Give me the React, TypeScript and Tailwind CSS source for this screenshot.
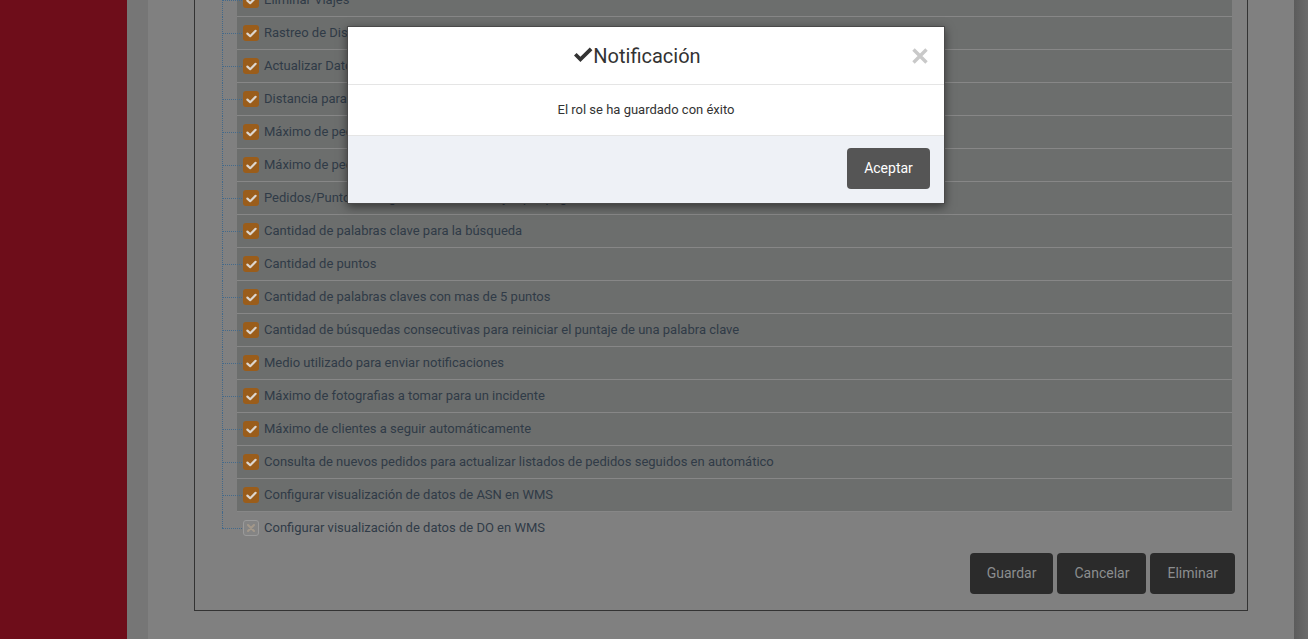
import React from "react";

const rows: { label: string; checked: boolean }[] = [
  { label: "Eliminar Viajes", checked: true },
  { label: "Rastreo de Dispositivos", checked: true },
  { label: "Actualizar Datos del Cliente", checked: true },
  { label: "Distancia para considerar la llegada a un punto", checked: true },
  { label: "Máximo de pedidos por viaje", checked: true },
  { label: "Máximo de pedidos por punto", checked: true },
  { label: "Pedidos/Puntos a cargar en la lista de viajes por página", checked: true },
  { label: "Cantidad de palabras clave para la búsqueda", checked: true },
  { label: "Cantidad de puntos", checked: true },
  { label: "Cantidad de palabras claves con mas de 5 puntos", checked: true },
  { label: "Cantidad de búsquedas consecutivas para reiniciar el puntaje de una palabra clave", checked: true },
  { label: "Medio utilizado para enviar notificaciones", checked: true },
  { label: "Máximo de fotografias a tomar para un incidente", checked: true },
  { label: "Máximo de clientes a seguir automáticamente", checked: true },
  { label: "Consulta de nuevos pedidos para actualizar listados de pedidos seguidos en automático", checked: true },
  { label: "Configurar visualización de datos de ASN en WMS", checked: true },
  { label: "Configurar visualización de datos de DO en WMS", checked: false },
];

function CheckBox({ checked }: { checked: boolean }) {
  if (checked) {
    return (
      <span className="w-[16px] h-[16px] rounded-[3px] bg-[#9a5d1b] flex items-center justify-center shrink-0">
        <svg width="11" height="9" viewBox="0 0 11 9">
          <path d="M1.4 4.6 L4.2 7.2 L9.6 1.8" fill="none" stroke="#dcd6cf" strokeWidth="2.2" strokeLinecap="round" strokeLinejoin="round" />
        </svg>
      </span>
    );
  }
  return (
    <span className="w-[16px] h-[16px] rounded-[3px] border border-[#9a9a9a] bg-[#848484] flex items-center justify-center shrink-0">
      <svg width="8" height="8" viewBox="0 0 8 8">
        <path d="M1 1 L7 7 M7 1 L1 7" stroke="#a3988a" strokeWidth="2" strokeLinecap="round" />
      </svg>
    </span>
  );
}

export default function App() {
  return (
    <div
      className="w-[1308px] h-[639px] overflow-hidden flex relative bg-[#808080]"
      style={{ fontFamily: "Roboto, 'Liberation Sans', sans-serif" }}
    >
      <div className="w-[127px] shrink-0 bg-[#6e0d1a]" />
      <div className="w-[21px] shrink-0 bg-[#767676]" />
      <div className="flex-1 px-[46px]">
        <div className="-mt-[17px] border border-[#333333] pr-[12px] pb-[16px]">
          <ul className="pl-[27px] pr-[3px]">
            {rows.map((r, i) => {
              const last = i === rows.length - 1;
              return (
                <li key={i} className="flex h-[33px]">
                  <div className="w-[15px] shrink-0 relative">
                    <div
                      className={`absolute left-0 top-0 border-l border-dotted border-[#43698a] ${last ? "h-[16px]" : "h-full"}`}
                    />
                    <div className="absolute left-0 top-[16px] w-[20px] border-t border-dotted border-[#43698a]" />
                  </div>
                  <div
                    className={`flex-1 flex items-center gap-[5px] pl-[6px] ${
                      r.checked ? "bg-[#6c6e6d] border-b border-[#878787] h-[33px]" : "h-[32px]"
                    }`}
                  >
                    <CheckBox checked={r.checked} />
                    <span className="text-[13px] text-[#303b47] whitespace-nowrap">{r.label}</span>
                  </div>
                </li>
              );
            })}
          </ul>
          <div className="flex justify-end gap-[4px] mt-[8px]">
            {["Guardar", "Cancelar", "Eliminar"].map((b) => (
              <button
                key={b}
                className="h-[41px] px-[17px] rounded-[4px] bg-[#2b2b2b] text-[#8c8e8f] text-[14px]"
              >
                {b}
              </button>
            ))}
          </div>
        </div>
      </div>
      <div className="w-[14px] shrink-0 bg-gradient-to-r from-[#5c5c5c] to-[#6b6b6b]" />

      <div className="absolute left-[347px] top-[26px] w-[598px] bg-white border border-[#4a4a4a] shadow-[0_3px_9px_rgba(0,0,0,0.5)]">
        <div className="h-[58px] border-b border-[#e5e5e5] flex items-center px-[15px]">
          <div className="flex-1 flex items-center justify-center text-[20px] text-[#333333]">
            <svg width="20" height="16" viewBox="0 0 20 16" className="mt-[-1px]">
              <path d="M1 8.6 L3.6 6 L7.4 9.8 L16.8 0.6 L19.4 3.2 L7.4 15 Z" fill="#333333" />
            </svg>
            <span className="mt-[1px]">Notificación</span>
          </div>
          <svg width="18" height="18" viewBox="0 0 18 18" className="mt-[1px]">
            <path d="M2.5 2.5 L15.5 15.5 M15.5 2.5 L2.5 15.5" stroke="#c9c9c9" strokeWidth="3.4" />
          </svg>
        </div>
        <div className="h-[50px] flex items-center justify-center text-[13px] text-[#333333]">
          El rol se ha guardado con éxito
        </div>
        <div className="bg-[#eef1f6] border-t border-[#e5e5e5] h-[68px] flex items-start justify-end pt-[12px] pr-[14px]">
          <button className="h-[41px] w-[83px] rounded-[4px] bg-[#555555] text-white text-[14px]">Aceptar</button>
        </div>
      </div>
    </div>
  );
}
